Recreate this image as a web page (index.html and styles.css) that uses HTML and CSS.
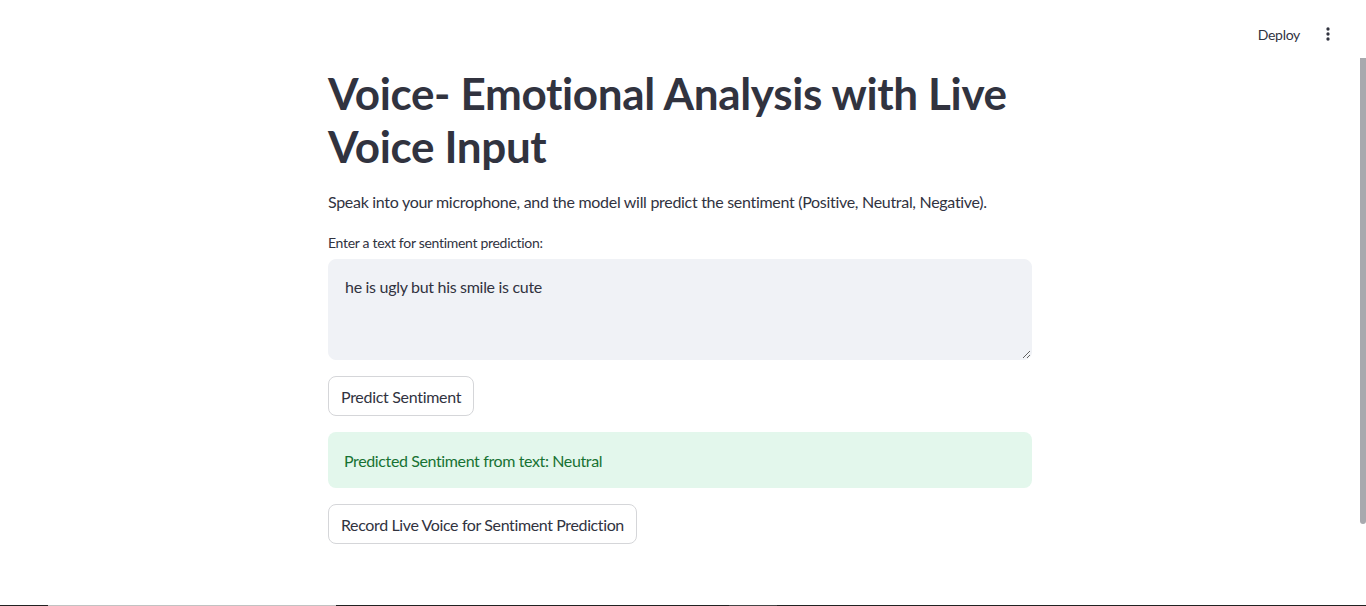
FILE: index.html
```html
<!DOCTYPE html>
<html lang="en">
<head>
<meta charset="utf-8">
<title>Voice- Emotional Analysis</title>
<link rel="stylesheet" href="styles.css">
</head>
<body>
<div class="app">
  <div class="main">
    <header class="topbar">
      <button class="deploy">Deploy</button>
      <button class="menu" aria-label="Main menu">
        <svg width="20" height="20" viewBox="0 0 24 24"><circle cx="12" cy="6" r="2" fill="#31333f"/><circle cx="12" cy="12" r="2" fill="#31333f"/><circle cx="12" cy="18" r="2" fill="#31333f"/></svg>
      </button>
    </header>
    <section class="block">
      <h1 class="title">Voice- Emotional Analysis with Live Voice Input</h1>
      <p class="intro">Speak into your microphone, and the model will predict the sentiment (Positive, Neutral, Negative).</p>
      <div class="field">
        <label class="label" for="txt">Enter a text for sentiment prediction:</label>
        <textarea id="txt" class="area">he is ugly but his smile is cute</textarea>
      </div>
      <div class="row"><button class="btn">Predict Sentiment</button></div>
      <div class="alert">Predicted Sentiment from text: Neutral</div>
      <div class="row"><button class="btn tight">Record Live Voice for Sentiment Prediction</button></div>
    </section>
  </div>
  <div class="gutter"><div class="thumb"></div></div>
</div>
<div class="taskline">
  <span class="seg dark w48"></span><span class="seg light w288"></span><span class="seg dark w393"></span><span class="seg mid w48"></span><span class="seg dark grow"></span>
</div>
</body>
</html>
```
FILE: styles.css
```css
* { box-sizing: border-box; }
html, body { margin: 0; padding: 0; }
body {
  width: 1366px;
  height: 606px;
  overflow: hidden;
  display: flex;
  flex-direction: column;
  background: #ffffff;
  color: #31333f;
  font-family: "Source Sans Pro", Lato, "Noto Sans", sans-serif;
  letter-spacing: -0.3px;
}
.app { flex: 1; display: flex; min-height: 0; }
.main { flex: 1; display: flex; flex-direction: column; }
.gutter { width: 6px; padding-top: 58px; }
.thumb { width: 6px; height: 466px; background: #a8a9ae; border-radius: 0 0 3px 3px; }

.topbar {
  height: 60px;
  display: flex;
  justify-content: flex-end;
  align-items: center;
  padding: 8px 20px 0 0;
  gap: 4px;
}
.deploy {
  font-family: inherit;
  font-size: 14px;
  letter-spacing: -0.3px;
  color: #31333f;
  background: none;
  border: none;
  padding: 4px 12px;
  cursor: pointer;
}
.menu { background: none; border: none; padding: 2px; display: flex; cursor: pointer; }

.block {
  width: 704px;
  margin: 0 auto;
  padding-top: 7px;
  display: flex;
  flex-direction: column;
}
.title {
  margin: 0 0 16px;
  font-size: 44px;
  line-height: 52.8px;
  font-weight: 700;
  letter-spacing: -0.35px;
  color: #31333f;
}
.intro { margin: 0 0 17px; font-size: 16px; line-height: 25.6px; }
.field { display: flex; flex-direction: column; }
.label { font-size: 14px; line-height: 24px; margin-bottom: 4px; }
.area {
  height: 101px;
  resize: vertical;
  font-family: inherit;
  font-size: 16px;
  letter-spacing: -0.3px;
  line-height: 22px;
  color: #31333f;
  background: #f0f2f6;
  border: 1px solid #f0f2f6;
  border-radius: 8px;
  padding: 16px 16px;
  outline: none;
}
.row { display: flex; margin-top: 16px; }
.btn {
  height: 40px;
  padding: 0 12px;
  font-family: inherit;
  font-size: 16px;
  letter-spacing: -0.3px;
  color: #31333f;
  background: #ffffff;
  border: 1px solid #d5d6d9;
  border-radius: 8px;
  cursor: pointer;
}
.btn.tight { letter-spacing: -0.38px; }
.alert {
  margin-top: 16px;
  height: 56px;
  display: flex;
  align-items: center;
  padding: 0 16px;
  background: #e3f7ec;
  color: #177233;
  border-radius: 8px;
  font-size: 16px;
  letter-spacing: -0.38px;
}

.taskline { height: 1px; display: flex; }
.seg { height: 1px; display: block; }
.dark { background: #222222; }
.light { background: #c2c2c2; }
.mid { background: #454545; }
.w48 { width: 48px; }
.w288 { width: 288px; }
.w393 { width: 393px; }
.grow { flex: 1; }
```
